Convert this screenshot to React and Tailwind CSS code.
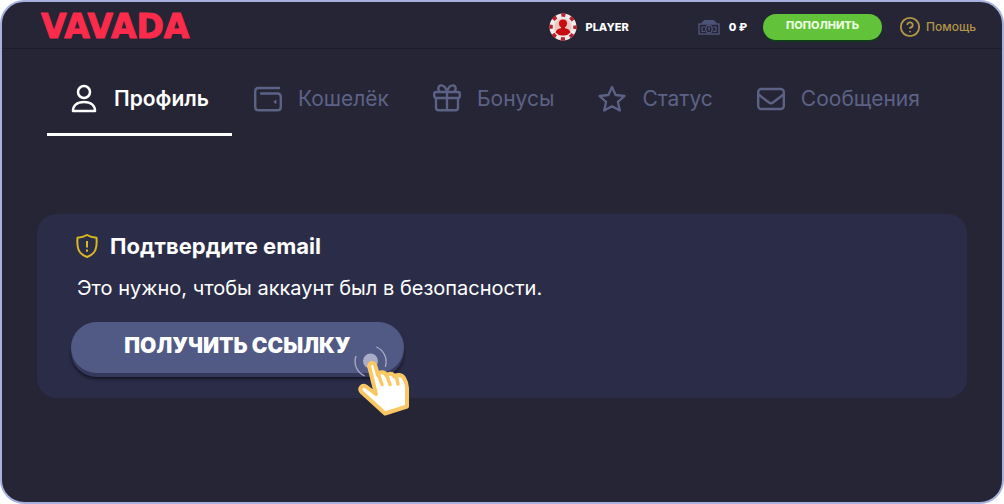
import { CircleHelp } from "lucide-react";

function Logo() {
  return (
    <svg viewBox="0 0 158 28" className="h-7 w-[158px] overflow-visible" role="img" aria-label="VAVADA">
      <text
        x="0"
        y="25"
        fill="#fb2b4b"
        stroke="#fb2b4b"
        strokeWidth="1"
        strokeLinejoin="round"
        className="font-['DejaVu_Sans',sans-serif] text-[33px] font-bold"
      >
        VAVADA
      </text>
    </svg>
  );
}

function ChipIcon() {
  return (
    <svg viewBox="0 0 30 30" className="size-[30px]" aria-hidden="true">
      <circle cx="15" cy="15" r="13.5" fill="#f3ece9" />
      <circle
        cx="15"
        cy="15"
        r="12"
        fill="none"
        stroke="#b52230"
        strokeWidth="3.5"
        strokeDasharray="4.2 5.225"
        strokeDashoffset="2.1"
      />
      <circle cx="15" cy="15" r="9" fill="#efc5bd" stroke="#e9e1df" strokeWidth="1.5" />
      <circle cx="15" cy="11.5" r="4" fill="#c70d12" />
      <path d="M13 14h4v2.2c3 .4 5 1.8 5.5 4.3A9 9 0 0 1 15 23.5a9 9 0 0 1-7.500-3C8 18 10 16.6 13 16.2z" fill="#c70d12" />
    </svg>
  );
}

function CashIcon() {
  return (
    <svg viewBox="0 0 22 16" className="h-4 w-[22px]" fill="none" stroke="#4c5378" aria-hidden="true">
      <path d="M3.500 4.500 6 1.500h10l2.500 3z" fill="#4c5378" strokeLinejoin="round" />
      <rect x="1" y="5" width="20" height="10" strokeWidth="1.500" />
      <path d="M3.500 8H7M3.500 12.500H7M15 8h3.500M15 12.500h3.500M4 8v4M18 8v4" strokeWidth="1.200" />
      <ellipse cx="11" cy="10" rx="3.200" ry="4" strokeWidth="1.500" />
      <path d="M11 7.500v4" strokeWidth="1.500" />
    </svg>
  );
}

function ProfileIcon() {
  return (
    <svg viewBox="0 0 28 30" className="h-[30px] w-7" fill="none" stroke="currentColor" strokeWidth="2.500" strokeLinejoin="round">
      <circle cx="14" cy="8" r="6" />
      <path d="M3 27c0-5.500 4-9 11-9s11 3.500 11 9z" />
    </svg>
  );
}

function WalletIcon() {
  return (
    <svg viewBox="0 0 28 30" className="h-[30px] w-7" fill="none" stroke="currentColor" strokeWidth="2.400" strokeLinecap="round" strokeLinejoin="round">
      <path d="M25 4H4.500Q1.200 4 1.200 7.500V23q0 3.300 3.300 3.300h19q3.300 0 3.300-3.300V13q0-3.500-3.300-3.500H7" />
      <path d="M22 16.500v3l-2-1.500z" fill="currentColor" strokeWidth="1" />
    </svg>
  );
}

function GiftIcon() {
  return (
    <svg viewBox="0 0 28 30" className="h-[30px] w-7" fill="none" stroke="currentColor" strokeWidth="2.400" strokeLinejoin="round">
      <rect x="1.200" y="8" width="25.600" height="6" rx="2" />
      <path d="M3 14v9.500Q3 26.300 5.500 26.300h17q2.500 0 2.500-2.800V14M14 8v18" />
      <path d="M14 8C13 3 10 1 7.500 1.500S4.500 6 7 8M14 8c1-5 4-7 6.500-6.500S23.500 6 21 8" />
    </svg>
  );
}

function StarIcon() {
  return (
    <svg viewBox="0 0 28 30" className="h-[30px] w-7" fill="none" stroke="currentColor" strokeWidth="2.300" strokeLinejoin="round">
      <path d="m14 3 3.600 8 8.900 1-6.600 5.900 1.900 8.600-7.800-4.300-7.800 4.300 1.900-8.600L1.500 12l8.900-1z" />
    </svg>
  );
}

function MailIcon() {
  return (
    <svg viewBox="0 0 28 30" className="h-[30px] w-7" fill="none" stroke="currentColor" strokeWidth="2.400" strokeLinejoin="round">
      <rect x="1.200" y="5" width="25.600" height="20" rx="3" />
      <path d="m1.500 10.500 10.500 8q2 1.500 4 0l10.500-8" />
    </svg>
  );
}

function ShieldIcon() {
  return (
    <svg viewBox="0 0 22 24" className="h-6 w-[22px]" fill="none" stroke="#d8b91f" strokeWidth="2" strokeLinejoin="round" aria-hidden="true">
      <path d="M11 1C8 2.800 5 3.500 1.500 3.800c-.8 9.700.5 16 9.500 19.200 9-3.200 10.300-9.500 9.500-19.200C17 3.500 14 2.800 11 1z" />
      <path d="M11 7v6.500M11 15.500v2.200" />
    </svg>
  );
}

function HandPointer() {
  return (
    <svg viewBox="0 0 64 76" className="pointer-events-none absolute top-5 left-[279px] h-[76px] w-16" fill="none" aria-hidden="true">
      <circle cx="20.500" cy="19" r="7.500" fill="#a9acc6" />
      <path d="M26.300 5A16 16 0 0 1 35.300 24.700M6 14a16 16 0 0 0 8.700 20" stroke="#a9acc6" strokeWidth="1.300" />
      <path
        d="M26 52 19.300 25c-1-4.500 5-5.500 6-1.500L28 33c1-3.500 7-4 8.500.5 1.500-2.500 6.500-2.500 8 1 2-2.500 7.500-2 9.500 1.500 1.500 2.500 3 6 3 10v18.500L35 71.500 12 50.500c-4-4 0-8 4-6z"
        fill="#fff"
        stroke="#f9c864"
        strokeWidth="4"
        strokeLinejoin="round"
      />
      <path d="m28.500 33 3.500 9.500M37 34l3 8.500M46.500 35.500 48 42" stroke="#f9c864" strokeWidth="3.500" strokeLinecap="round" />
    </svg>
  );
}

const tabs = [
  { label: "Профиль", icon: ProfileIcon, active: true },
  { label: "Кошелёк", icon: WalletIcon },
  { label: "Бонусы", icon: GiftIcon },
  { label: "Статус", icon: StarIcon },
  { label: "Сообщения", icon: MailIcon },
];

export default function App() {
  return (
    <div className="min-h-screen bg-white font-['Inter',sans-serif] flex">
      <div className="flex-1 rounded-3xl border-2 border-[#a6b1de] bg-[#262535] overflow-hidden">
        <header className="flex h-[47px] items-center border-b border-[#1d1c2c] pt-1 pr-[26px] pl-[39px]">
          <a href="#home" className="mr-auto">
            <Logo />
          </a>
          <a href="#player" className="mr-[69px] flex items-center gap-[7px] text-[11px] font-extrabold text-white">
            <ChipIcon />
            PLAYER
          </a>
          <div className="mr-4 flex items-center gap-[9px] text-[11px] font-extrabold text-white">
            <CashIcon />
            0 ₽
          </div>
          <button
            type="button"
            className="mr-[17px] h-[26px] w-[119px] rounded-full bg-[#62c33b] pb-[3px] text-[11px] font-extrabold text-[#eaffdf] shadow-[0_2px_1px_#123c1b]"
          >
            ПОПОЛНИТЬ
          </button>
          <a href="#help" className="flex items-center gap-[5px] text-xs font-medium text-[#b29648]">
            <CircleHelp className="size-[22px]" strokeWidth={2} />
            Помощь
          </a>
        </header>

        <nav className="ml-[45px] flex pt-3">
          {tabs.map(({ label, icon: Icon, active }) => (
            <a
              key={label}
              href={`#${label}`}
              className={
                active
                  ? "flex h-[75px] items-center gap-4 border-b-3 border-white px-[23px] pt-[3px] text-[21px] font-semibold text-white"
                  : "flex h-[75px] items-center gap-4 border-b-3 border-transparent px-[22px] pt-[3px] text-[21px] text-[#5c6286]"
              }
            >
              <Icon />
              {label}
            </a>
          ))}
        </nav>

        <section className="mx-[35px] mt-[78px] h-[184px] rounded-[20px] bg-[#2b2d48] pt-4 pl-[34px]">
          <div className="flex items-center gap-3 pl-[5px]">
            <ShieldIcon />
            <h1 className="text-[22px] leading-8 font-bold text-white">Подтвердите email</h1>
          </div>
          <p className="mt-[10px] pl-[6px] text-xl leading-8 text-white">Это нужно, чтобы аккаунт был в безопасности.</p>
          <div className="relative mt-[18px] w-fit">
            <button
              type="button"
              className="h-[51px] w-[333px] rounded-full bg-[#515a85] pb-[3px] text-[21px] font-black text-white shadow-[0_4px_0_#34385a,0_6px_3px_#151425]"
            >
              ПОЛУЧИТЬ ССЫЛКУ
            </button>
            <HandPointer />
          </div>
        </section>
      </div>
    </div>
  );
}
